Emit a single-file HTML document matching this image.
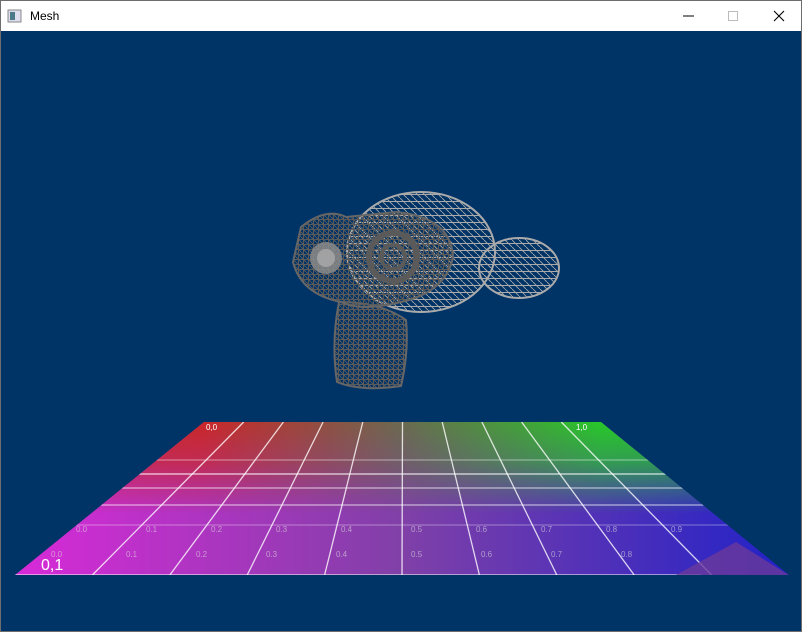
<!DOCTYPE html>
<html><head><style>
html,body{margin:0;padding:0;width:802px;height:632px;overflow:hidden;background:#fff;font-family:"Liberation Sans",sans-serif}
.win{position:absolute;left:0;top:0;width:800px;height:630px;border:1px solid #6d6d6d;background:#fff}
.title{position:absolute;left:0;top:0;width:800px;height:30px;background:#fff}
.title span{position:absolute;left:29px;top:8px;font-size:12px;color:#000}
.client{position:absolute;left:0;top:30px;width:800px;height:600px;background:#003366}
</style></head><body>
<div class="win">
<div class="title">
<svg width="800" height="30" style="position:absolute;left:0;top:0">
<rect x="7" y="9" width="13" height="12" fill="#dde" stroke="#888"/>
<rect x="9" y="11" width="5" height="8" fill="#4a7a8a"/>
<line x1="682" y1="15" x2="693" y2="15" stroke="#000"/>
<rect x="727.5" y="10.5" width="9" height="9" fill="none" stroke="#bbb"/>
<path d="M773 10L783 20M783 10L773 20" stroke="#000" stroke-width="1.1"/>
</svg>
<span>Mesh</span>
</div>
<div class="client">
<svg width="800" height="600" viewBox="0 29 800 600" style="position:absolute;left:0;top:0">
<defs>
<linearGradient id="bot" x1="14" x2="788" gradientUnits="userSpaceOnUse"><stop offset="0" stop-color="#d82ad8"/><stop offset="0.5" stop-color="#8040a8"/><stop offset="1" stop-color="#2222c8"/></linearGradient>
<linearGradient id="top" x1="203" x2="600" gradientUnits="userSpaceOnUse"><stop offset="0" stop-color="#c82828"/><stop offset="0.5" stop-color="#6a6a50"/><stop offset="1" stop-color="#28c828"/></linearGradient>
<linearGradient id="fade" x1="0" y1="420" x2="0" y2="573" gradientUnits="userSpaceOnUse"><stop offset="0" stop-color="#fff"/><stop offset="0.25" stop-color="#bbb"/><stop offset="0.6" stop-color="#000"/></linearGradient>
<mask id="m"><rect x="0" y="400" width="800" height="200" fill="url(#fade)"/></mask>
<clipPath id="cp"><polygon points="203,420 600,420 788,573 14,573"/></clipPath>
<pattern id="wl" width="7" height="7" patternUnits="userSpaceOnUse"><path d="M0 0L7 7M0 3.5H7" stroke="#aaa" stroke-width="0.9"/></pattern>
<pattern id="wd" width="5" height="5" patternUnits="userSpaceOnUse"><path d="M0 0L5 5M0 2.5H5M2.5 0V5" stroke="#5a5a5a" stroke-width="1"/></pattern>
</defs>
<polygon points="203,420 600,420 788,573 14,573" fill="url(#bot)"/>
<polygon points="203,420 600,420 788,573 14,573" fill="url(#top)" mask="url(#m)"/>
<g stroke="#fff" stroke-opacity="0.8" stroke-width="1.3" clip-path="url(#cp)">
<line x1="14" y1="573" x2="700" y2="573"/>
<line x1="0" y1="458" x2="800" y2="458" stroke-opacity="0.4"/>
<line x1="0" y1="472" x2="800" y2="472"/>
<line x1="0" y1="486" x2="800" y2="486" stroke-opacity="0.6"/>
<line x1="0" y1="503" x2="800" y2="503" stroke-opacity="0.6"/>
<line x1="0" y1="523" x2="800" y2="523" stroke-opacity="0.3"/>
<line x1="242.7" y1="420" x2="91.4" y2="573"/>
<line x1="282.4" y1="420" x2="168.8" y2="573"/>
<line x1="322.1" y1="420" x2="246.2" y2="573"/>
<line x1="361.8" y1="420" x2="323.6" y2="573"/>
<line x1="401.5" y1="420" x2="401" y2="573"/>
<line x1="441.2" y1="420" x2="478.4" y2="573"/>
<line x1="480.9" y1="420" x2="555.8" y2="573"/>
<line x1="520.6" y1="420" x2="633.2" y2="573"/>
<line x1="560.3" y1="420" x2="710.6" y2="573"/>
</g>
<polygon points="735,540 788,573 675,573" fill="#6a3a9a" opacity="0.8"/>
<text x="40" y="568" font-size="16" fill="#fff">0,1</text>
<text x="205" y="428" font-size="8" fill="#fff">0,0</text>
<text x="575" y="428" font-size="8" fill="#fff">1,0</text>
<g font-size="8" fill="#ddd" opacity="0.6">
<text x="50" y="555">0.0</text><text x="125" y="555">0.1</text><text x="195" y="555">0.2</text><text x="265" y="555">0.3</text><text x="335" y="555">0.4</text><text x="410" y="555">0.5</text><text x="480" y="555">0.6</text><text x="550" y="555">0.7</text><text x="620" y="555">0.8</text>
<text x="75" y="530">0.0</text><text x="145" y="530">0.1</text><text x="210" y="530">0.2</text><text x="275" y="530">0.3</text><text x="340" y="530">0.4</text><text x="410" y="530">0.5</text><text x="475" y="530">0.6</text><text x="540" y="530">0.7</text><text x="605" y="530">0.8</text><text x="670" y="530">0.9</text>
</g>
<ellipse cx="420" cy="250" rx="74" ry="60" fill="url(#wl)" stroke="#aaa" stroke-width="2"/>
<ellipse cx="518" cy="266" rx="40" ry="30" fill="url(#wl)" stroke="#aaa" stroke-width="2"/>
<path d="M338 300 Q330 340 336 380 Q360 390 400 384 Q408 350 405 318 Q380 300 338 300Z" fill="url(#wd)" stroke="#666" stroke-width="2"/>
<path d="M300 225 Q325 205 345 215 L395 210 Q450 215 452 255 Q445 290 400 300 Q360 310 340 300 Q300 292 292 260 Z" fill="url(#wd)" stroke="#666" stroke-width="2"/>
<circle cx="325" cy="256" r="16" fill="#8a8a8a" opacity="0.85"/>
<circle cx="325" cy="256" r="9" fill="#aaa" opacity="0.8"/>
<circle cx="392" cy="255" r="24" fill="none" stroke="#5a5a5a" stroke-width="6"/>
<circle cx="392" cy="255" r="12" fill="none" stroke="#5a5a5a" stroke-width="4"/>
</svg>
</div>
</div>
</body></html>
